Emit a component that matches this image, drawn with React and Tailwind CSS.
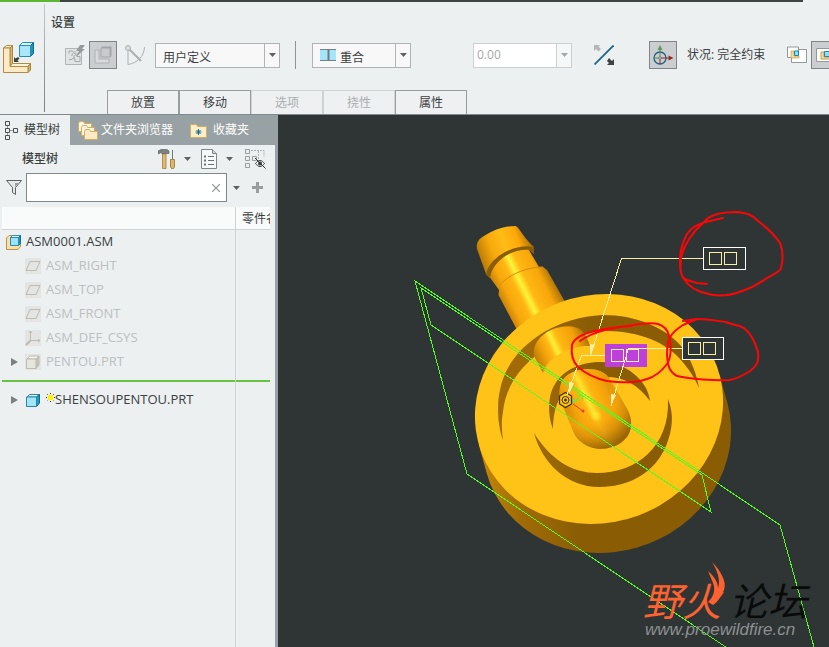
import React from 'react';
import clsx from 'clsx';

const tabs = [
    { label: '放置' },
    { label: '移动' },
    { label: '选项', disabled: true },
    { label: '挠性', disabled: true },
    { label: '属性' },
];

const treeItems = [
    { name: 'ASM_RIGHT', icon: 'plane' },
    { name: 'ASM_TOP', icon: 'plane' },
    { name: 'ASM_FRONT', icon: 'plane' },
    { name: 'ASM_DEF_CSYS', icon: 'csys' },
    { name: 'PENTOU.PRT', icon: 'part', expandable: true },
];

const Caret = ({ className }) => (
    <svg viewBox="0 0 7 4" className={clsx('w-[7px] h-1 shrink-0', className)} aria-hidden="true">
        <path d="M0 0h7L3.500 4z" fill="currentColor" />
    </svg>
);

const AssembleIcon = () => (
    <svg viewBox="0 0 32 32" className="w-8 h-8" aria-hidden="true">
        <path d="M.5 6l3-2.500h6L7 6z" fill="#fdf0cd" stroke="#b18c45" />
        <path d="M7 6l2.500-2.500v18L7 24.500z" fill="#d6b878" stroke="#a9853f" />
        <path d="M7 24.500l2.500-3h18l-2.500 3z" fill="#fff3d3" stroke="#b18c45" />
        <path d="M25 24.500l2.500-3v6.500l-2.500 2.500z" fill="#d2b26d" stroke="#a9853f" />
        <path d="M.5 6H7v18.500h18v6H.5z" fill="#fdeac5" stroke="#b18c45" />
        <path d="M16.500 3.500l3-3h11l-3 3z" fill="#d9f5fc" stroke="#2b8db0" />
        <path d="M27.500 3.500l3-3v11l-3 3z" fill="#1b94bd" stroke="#136c8d" />
        <path d="M16.500 3.500h11v11h-11z" fill="#a9e6fa" stroke="#2b8db0" />
        <path d="M11 15v5h5l-1.500-1.500 2-2-1.500-1.500-2.500 1.500z" fill="#3d4242" />
    </svg>
);

const PuzzleIcon = () => (
    <svg viewBox="0 0 20 20" className="w-5 h-5" fill="none" aria-hidden="true">
        <path d="M.5 3.500h16v16H.5z" fill="#e2e3e3" stroke="#b1b3b4" />
        <path d="M4 8.500V6h3c2 0 2 3 0 3v2M4 14.500h3c0-2 3-2 3 0v2h5v-5h-3c0-2-3-2-3 0v3M10 6v3h3" stroke="#a5a7a8" />
        <path d="M15 0h5l-3 4h3l-9 8 3-6h-3z" fill="#97999a" />
    </svg>
);

const InterfaceIcon = () => (
    <svg viewBox="0 0 20 20" className="w-5 h-5" aria-hidden="true">
        <path d="M2 5h4v9h10v4H2z" fill="#d8d9da" stroke="#b0b1b3" />
        <path d="M8 3l1.500-1.500h9V11L17 12.500z" fill="#a4a5a7" />
        <path d="M8 3h9v9H8z" fill="#c9cacc" stroke="#a4a5a7" />
    </svg>
);

const MechanismIcon = () => (
    <svg viewBox="0 0 20 20" className="w-5 h-5" fill="none" stroke="#adafb0" aria-hidden="true">
        <path d="M3 5v14.500M3 19.500C12 18 19 12 19.500 2" />
        <path d="M4 4l12 12" strokeWidth="2" />
        <circle cx="3" cy="3" r="2.500" fill="#dcdedf" />
    </svg>
);

const FlipIcon = () => (
    <svg viewBox="0 0 20 20" className="w-5 h-5" aria-hidden="true">
        <path d="M.5 19.500l19-19" stroke="#1b6483" strokeWidth="1.800" />
        <path d="M0 0h6L4.500 1.500 7 4 4.500 6.500 2 4 0 6z" fill="#b4b6b7" />
        <path d="M20 20h-7l2-2-2-2 2-3 3 3 2-2z" fill="#3d4242" />
    </svg>
);

const DraggerIcon = () => (
    <svg viewBox="0 0 22 22" className="w-[22px] h-[22px]" fill="none" aria-hidden="true">
        <circle cx="8" cy="14" r="6" stroke="#1b6483" strokeWidth="1.300" />
        <path d="M8 14H2M8 14V5" stroke="#4e8a45" />
        <path d="M8 14v6M8 14h9" stroke="#8e2b24" />
        <path d="M5.500 6L8 1l2.500 5z" fill="#5c9950" />
        <path d="M16.500 11.500l5 2.500-5 2.500z" fill="#952a23" />
        <circle cx="8" cy="14" r="1.200" fill="#ecf0f1" stroke="#333" strokeWidth=".5" />
    </svg>
);

const WindowIcon = () => (
    <svg viewBox="0 0 20 18" className="w-5 h-[18px] shrink-0" aria-hidden="true">
        <path d="M4.500 3.500h15v13h-15z" fill="#fff" stroke="#949899" />
        <path d="M.5 1h11v10.500H.5z" fill="#fdfdfd" stroke="#949899" />
        <path d="M4 5h3v5h5v2H4z" fill="#f4dca2" stroke="#c59d4c" strokeWidth=".7" />
        <path d="M7.500 5h4v4.500h-4z" fill="#8ee0f8" stroke="#1f86ac" />
    </svg>
);

const MainWindowIcon = () => (
    <svg viewBox="0 0 20 18" className="w-5 h-[18px] shrink-0" aria-hidden="true">
        <path d="M.5 2.500h19v13H.5z" fill="#fff" stroke="#949899" />
        <path d="M5 6h3v5h6v2H5z" fill="#f4dca2" stroke="#c59d4c" />
        <path d="M8.500 5.500h5v5h-5z" fill="#8ee0f8" stroke="#1f86ac" />
    </svg>
);

const ModelTreeIcon = () => (
    <svg viewBox="0 0 14 19" className="w-[14px] h-[19px]" fill="none" stroke="#4b4f50" aria-hidden="true">
        <path d="M1.500.5h4v4h-4zM1.500 7.500h4v4h-4zM1.500 14.500h4v4h-4zM9.500 7.500h4v4h-4z" />
        <path d="M3.500 4.500v3M3.500 11.500v3M5.500 9.500h4" strokeDasharray="1 1" />
    </svg>
);

const FoldersIcon = () => (
    <svg viewBox="0 0 20 19" className="w-5 h-[19px]" stroke="#d5ad62" aria-hidden="true">
        <path d="M.5 2.500l1-2h4l1 2h7v8H.5z" fill="#fff5df" />
        <path d="M3.500 6.500l1-2h4l1 2h7v8h-13z" fill="#fff5df" />
        <path d="M6.500 10.500l1-2h4l1 2h7v8h-13z" fill="#fcebc4" />
    </svg>
);

const FavoriteIcon = () => (
    <svg viewBox="0 0 17 15" className="w-[17px] h-[15px]" aria-hidden="true">
        <path d="M.5 3.500V1.500h6l1 2h9v11H.5z" fill="#fdeecb" stroke="#d5ad62" />
        <path d="M8.500 6v6M5.500 9h6M6.500 7l4 4M10.500 7l-4 4" stroke="#14708f" />
    </svg>
);

const ToolsIcon = () => (
    <svg viewBox="0 0 17 20" className="w-[17px] h-5" aria-hidden="true">
        <path d="M0 2l3-1.500h6L11 2v2.500H8V5H4L3 3.500 0 5z" fill="#7c8082" stroke="#55595b" strokeWidth=".6" />
        <path d="M4.500 5h3.500v14.500H4.500z" fill="#e0bb74" stroke="#a37a35" strokeWidth=".8" />
        <path d="M14 1h1v9h-1z" fill="#72777a" />
        <path d="M12.500 10.500h4v7.500l-1 1.500h-2l-1-1.500z" fill="#e0b768" stroke="#94702f" strokeWidth=".8" />
    </svg>
);

const ListIcon = () => (
    <svg viewBox="0 0 16 20" className="w-4 h-5" fill="none" aria-hidden="true">
        <path d="M.5.500h11l4 4v15H.5z" fill="#f7f8f9" stroke="#7f8485" />
        <path d="M11.500.500v4h4" fill="#c4d7e5" stroke="#7f8485" />
        <path d="M7 7.500h6M7 11.500h6M7 15.500h6" stroke="#6c7172" />
        <path d="M3 7.500h2M3 11.500h2M3 15.500h2" stroke="#6c7172" strokeWidth="2" />
    </svg>
);

const HideTreeIcon = () => (
    <svg viewBox="0 0 21 20" className="w-[21px] h-5" fill="none" aria-hidden="true">
        <path d="M.5.500h4v4h-4zM.5 7.500h4v4h-4zM.5 14.500h4v4h-4zM7.500 7.500h4v4h-4z" stroke="#999d9e" />
        <path d="M6 1.500h13v6M13.500 2v8" stroke="#a9adae" strokeDasharray="2 1" />
        <path d="M10.500 14.500c3-4 6-4 9 0-3 4-6 4-9 0z" fill="#eef1f2" stroke="#3c4142" />
        <circle cx="15" cy="14.500" r="2" fill="#3c4142" />
        <path d="M10 9l10.500 10.500" stroke="#2e3333" />
    </svg>
);

const FunnelIcon = () => (
    <svg viewBox="0 0 16 15" className="w-4 h-[15px]" aria-hidden="true">
        <path d="M.5.500h15L9.500 7.500v7l-3-2v-5z" fill="#e5e9ea" stroke="#5e6364" />
        <path d="M9 3h4L9 7z" fill="#9a9fa0" />
    </svg>
);

const AssemblyNodeIcon = () => (
    <svg viewBox="0 0 15 15" className="w-[15px] h-[15px] shrink-0" aria-hidden="true">
        <path d="M.5 3L3 .5h11.500v11L12 14.500H.5z" fill="#f7e0ab" stroke="#ba9146" />
        <path d="M4.500 2.500l2-2h8l-2 2z" fill="#e0f7fd" stroke="#2b8db0" />
        <path d="M12.500 2.500l2-2v8l-2 2z" fill="#2198c2" stroke="#176f8e" />
        <path d="M4.500 2.500h8v8h-8z" fill="#9be3f9" stroke="#2b8db0" />
    </svg>
);

const NodeIcon = ({ type }) => (
    <svg viewBox="0 0 16 16" className="w-4 h-4 shrink-0 bg-[#e3e4e3]" fill="none" stroke="#bdbcae" aria-hidden="true">
        {type === 'plane' && <path d="M5 3.500h10L11 12.500H1z" />}
        {type === 'csys' && (
            <g>
                <path d="M5.500 1v9.500H15M4 3l1.500-2L7 3M13 9l2 1.500-2 1.500" />
                <path d="M5.500 10.500L1 15" strokeWidth="2" />
            </g>
        )}
        {type === 'part' && (
            <g>
                <path d="M2 5l3-3h9l-3 3z" fill="#f5f5f0" />
                <path d="M11 5l3-3v9l-3 3.500z" fill="#c5c4b4" />
                <path d="M1.500 5H11v9.500H1.500z" fill="#e6e6df" />
            </g>
        )}
    </svg>
);

const PartIcon = () => (
    <svg viewBox="0 0 14 13" className="w-[14px] h-[13px] shrink-0" aria-hidden="true">
        <path d="M1 3L3.500.500h10L10.500 3z" fill="#dff7fd" stroke="#2a85a6" />
        <path d="M10.500 3l3-2.500v8.500l-3 3.500z" fill="#1d9bc9" stroke="#14698a" />
        <path d="M.5 3h10v9.500H.5z" fill="#a2e6fa" stroke="#2a85a6" />
    </svg>
);

const Expander = ({ name }) => (
    <button type="button" aria-label={`展开 ${name}`} className="w-2 h-6 flex items-center shrink-0">
        <svg viewBox="0 0 7 8" className="w-[7px] h-2" aria-hidden="true">
            <path d="M0 0l7 4-7 4z" fill="#7c8081" />
        </svg>
    </button>
);

const Ribbon = () => (
    <header className="shrink-0 border-b border-[#7e8b8e]">
        <div className="flex h-[2px]">
            <div className="w-[60px] bg-[#5db534]" />
            <div className="flex-1 bg-[#3c4444]" />
            <div className="w-[26px]" />
        </div>
        <div className="flex h-28">
            <button type="button" aria-label="装配" className="w-11 shrink-0 flex items-center pl-[3px]">
                <AssembleIcon />
            </button>
            <div className="w-px my-[2px] shrink-0 bg-linear-to-b from-[#c5c9ca] to-[#7b8081]" />
            <div className="flex-1 min-w-0 flex flex-col">
                <h1 className="pl-[6px] pt-[13px] h-[39px] leading-4 text-xs font-medium">设置</h1>
                <div className="flex items-center h-7 pl-5 whitespace-nowrap overflow-hidden shrink-0">
                    <button type="button" aria-label="界面放置" className="shrink-0">
                        <PuzzleIcon />
                    </button>
                    <button type="button" aria-label="手动放置" className="ml-1 w-7 h-7 flex items-center justify-center shrink-0 border border-[#828586] bg-[#cbcdd0]">
                        <InterfaceIcon />
                    </button>
                    <button type="button" aria-label="约束转换" className="ml-2 shrink-0">
                        <MechanismIcon />
                    </button>
                    <div className="relative ml-[10px] w-[125px] h-[25px] shrink-0 bg-[#f8f8f8] border border-[#b0b3b4]">
                        <select aria-label="连接类型" className="appearance-none w-full h-full pl-[7px] pr-4 pb-[2px] text-xs outline-none">
                            <option>用户定义</option>
                        </select>
                        <span className="absolute right-0 inset-y-0 w-[15px] flex items-center justify-center border-l border-[#b0b3b4] pointer-events-none text-[#5e6262]">
                            <Caret />
                        </span>
                    </div>
                    <div className="ml-[15px] w-px h-7 shrink-0 bg-[#8f9495]" />
                    <div className="relative ml-4 w-[99px] h-[25px] shrink-0 bg-[#f8f8f8] border border-[#b0b3b4]">
                        <svg viewBox="0 0 16 12" className="absolute left-[7px] top-[5px] w-4 h-3" aria-hidden="true">
                            <path d="M0 0h16v12H0z" fill="#a3e5fa" />
                            <path d="M0 .5h16M0 11.500h16" stroke="#71828a" />
                            <path d="M8.500 0v12" stroke="#777" strokeWidth="2" />
                        </svg>
                        <select aria-label="约束类型" className="appearance-none w-full h-full pl-[27px] pr-4 pb-[2px] text-xs outline-none">
                            <option>重合</option>
                        </select>
                        <span className="absolute right-0 inset-y-0 w-[15px] flex items-center justify-center border-l border-[#b0b3b4] pointer-events-none text-[#5e6262]">
                            <Caret />
                        </span>
                    </div>
                    <div className="flex ml-[62px] w-[99px] h-[25px] shrink-0 border border-[#cdd0d1] bg-white">
                        <input aria-label="偏移" disabled defaultValue="0.00" className="flex-1 min-w-0 pl-[3px] text-xs text-[#a5a8a9] outline-none" />
                        <button type="button" disabled aria-label="最近使用的值" className="w-[15px] flex items-center justify-center border-l border-[#cdd0d1] bg-[#f6f7f7] text-[#a5a8a9]">
                            <Caret />
                        </button>
                    </div>
                    <button type="button" aria-label="反向" className="ml-[22px] shrink-0">
                        <FlipIcon />
                    </button>
                    <button type="button" aria-label="3D 拖动器" className="ml-[35px] w-7 h-7 flex items-center justify-center shrink-0 border border-[#828586] bg-[#cbcdd0]">
                        <DraggerIcon />
                    </button>
                    <span className="ml-[10px] text-xs">状况: 完全约束</span>
                    <button type="button" aria-label="单独窗口" className="ml-[22px] shrink-0">
                        <WindowIcon />
                    </button>
                    <button type="button" aria-label="主窗口" className="ml-1 pl-1 w-7 h-7 flex items-center shrink-0 border border-[#828586] bg-[#cbcdd0]">
                        <MainWindowIcon />
                    </button>
                </div>
                <nav className="flex mt-auto pl-[62px]">
                    {tabs.map((tab) => (
                        <button
                            key={tab.label}
                            type="button"
                            disabled={tab.disabled}
                            className={clsx(
                                'w-[72px] h-6 border border-b-0 bg-[#eff0f2] text-xs leading-5',
                                tab.disabled ? 'border-[#d0d3d4] text-[#abaeaf]' : 'border-[#989d9e]'
                            )}
                        >
                            {tab.label}
                        </button>
                    ))}
                </nav>
            </div>
        </div>
    </header>
);

const Sidebar = () => (
    <aside className="w-[278px] shrink-0 flex flex-col border-r-3 border-[#98a1a3]">
        <nav className="flex h-[30px] bg-[#98a1a3] text-white text-xs">
            <button type="button" className="w-[70px] pl-1 flex items-center gap-[6px] bg-[#ecf0f1] text-[#3a3f40]">
                <ModelTreeIcon />
                模型树
            </button>
            <button type="button" className="pl-2 flex items-center gap-[3px]">
                <FoldersIcon />
                文件夹浏览器
            </button>
            <button type="button" className="pl-[17px] flex items-center gap-[6px]">
                <FavoriteIcon />
                收藏夹
            </button>
        </nav>

        <div className="flex items-center h-7 pl-[22px] pr-[9px]">
            <h2 className="text-xs font-medium flex-1">模型树</h2>
            <button type="button" aria-label="设置" className="flex items-center gap-[9px] text-[#5e6262]">
                <ToolsIcon />
                <Caret />
            </button>
            <button type="button" aria-label="显示" className="ml-[10px] flex items-center gap-[9px] text-[#5e6262]">
                <ListIcon />
                <Caret />
            </button>
            <button type="button" aria-label="隐藏树" className="ml-3">
                <HideTreeIcon />
            </button>
        </div>

        <div className="flex items-center pl-[6px] pr-3">
            <FunnelIcon />
            <div className="flex flex-1 ml-1 h-[29px] border border-[#7d898c] bg-white">
                <input aria-label="过滤模型树" className="flex-1 min-w-0 px-1 text-xs outline-none" />
                <button type="button" aria-label="清除" className="w-5 flex items-center justify-center">
                    <svg viewBox="0 0 8 8" className="w-2 h-2" aria-hidden="true">
                        <path d="M0 0l8 8M8 0L0 8" stroke="#8e9293" strokeWidth="1.200" />
                    </svg>
                </button>
            </div>
            <button type="button" aria-label="搜索选项" className="ml-[6px] text-[#5e6262]">
                <Caret />
            </button>
            <button type="button" aria-label="添加" className="ml-3">
                <svg viewBox="0 0 11 11" className="w-[11px] h-[11px]" aria-hidden="true">
                    <path d="M5.500 0v11M0 5.500h11" stroke="#999d9e" strokeWidth="3" />
                </svg>
            </button>
        </div>

        <div className="flex-1 flex flex-col mt-[5px] pl-[2px] pr-[5px]">
            <table className="w-full table-fixed border-separate border-spacing-0 text-[13px] text-left whitespace-nowrap">
                <colgroup>
                    <col />
                    <col className="w-[34px]" />
                </colgroup>
                <thead className="bg-[#f9fafa]">
                    <tr className="h-[23px]">
                        <th aria-label="名称" className="p-0 border-r border-b border-[#cfd3d4]" />
                        <th className="p-0 pl-[6px] pt-[2px] border-b border-[#cfd3d4] overflow-hidden text-xs font-normal">零件名</th>
                    </tr>
                </thead>
                <tbody>
                    <tr>
                        <td className="p-0 border-r border-[#cfd3d4]">
                            <div className="flex items-center h-6 pl-1 gap-[5px]">
                                <AssemblyNodeIcon />
                                ASM0001.ASM
                            </div>
                        </td>
                        <td />
                    </tr>
                    {treeItems.map((item) => (
                        <tr key={item.name} className="text-[#bcbfc0]">
                            <td className="p-0 border-r border-[#cfd3d4]">
                                <div className={clsx('flex items-center h-6', item.expandable ? 'pl-[9px]' : 'pl-[23px]')}>
                                    {item.expandable && (
                                        <span className="w-[14px] flex">
                                            <Expander name={item.name} />
                                        </span>
                                    )}
                                    <NodeIcon type={item.icon} />
                                    <span className="ml-[5px]">{item.name}</span>
                                </div>
                            </td>
                            <td />
                        </tr>
                    ))}
                    {/* Insertion bar */}
                    <tr className="h-[14px]">
                        <td className="p-0 border-r border-[#cfd3d4]">
                            <div className="h-[2px] bg-[#68c242]" />
                        </td>
                        <td className="p-0">
                            <div className="h-[2px] bg-[#68c242]" />
                        </td>
                    </tr>
                    <tr>
                        <td className="p-0 border-r border-[#cfd3d4]">
                            <div className="flex items-center h-6 pl-[9px]">
                                <span className="w-[15px] flex">
                                    <Expander name="SHENSOUPENTOU.PRT" />
                                </span>
                                <PartIcon />
                                <svg viewBox="0 0 9 9" className="w-[9px] h-[9px] ml-[6px] mb-[6px] shrink-0" aria-hidden="true">
                                    <path d="M4.500 0v9M0 4.500h9M1 1l7 7M8 1L1 8" stroke="#2e2e18" strokeDasharray="1 1" />
                                    <path d="M2 2h5v5H2z" fill="#fff200" />
                                </svg>
                                SHENSOUPENTOU.PRT
                            </div>
                        </td>
                        <td />
                    </tr>
                </tbody>
            </table>
            <div className="flex flex-1">
                <div className="flex-1 border-r border-[#cfd3d4]" />
                <div className="w-[34px]" />
            </div>
        </div>
    </aside>
);

const Nozzle = () => (
    <g>
        {/* Hose barb */}
        <path d="M486 272L499 290L498.500 295L516 328L535 360L580 330L564 300L547 270L543 267L539 267L526 245L500 240z" fill="url(#neck)" />
        <path d="M500 285C506 277 524 267 543 267" fill="none" stroke="#d38a06" strokeWidth="1" />
        <path d="M477 249C476 244 478 239 484 236C493 230 504 226 515 226C519 226 521 235 534 247L534 254L528 248C512 246 492 262 490 278L486 274z" fill="url(#barb)" />
        <path d="M534 247C514 243 488 258 486 275L490 278C492 262 511 248 530 250L534 254z" fill="#8a5d05" />

        {/* Disc */}
        <path d="M478.700 444.200L486.700 473.200A125.400 113.500 -20 0 0 727.300 402.800L719.300 373.800z" fill="url(#side)" />
        <ellipse cx="599" cy="409" rx="125.400" ry="113.500" transform="rotate(-20 599 409)" fill="#ffc216" />

        {/* Outer groove */}
        <path
            d="M503 440C497 424 497 402 500 390C507 351 549 318 602 315C638 315 666 328 684 349C691 360 697 375 699 388C694 376 688 368 680 359C666 343 640 331 606 331C556 332 507 366 503 412C501 422 502 431 503 440z"
            fill="url(#groove)"
        />
        <path
            d="M534 433C551 460 572 473 597 473C636 473 670 447 668 399C674 414 673 429 666 446C655 472 630 487 599 487C567 487 542 463 534 433z"
            fill="url(#groove)"
        />

        {/* Middle tube */}
        <path d="M534 356C532 345 540 335 551 330C563 325 576 325 582 331C586 335 588 340 590 346C574 345 548 355 543 373z" fill="url(#middle)" />

        {/* Centre hole and tip */}
        <path
            d="M553 429C547 414 548 394 555 384C564 369 582 362 601 362C625 362 648 380 650 401C639 386 625 377 608 377L570 385C557 396 553 413 553 429z"
            fill="url(#groove)"
        />
        <path
            d="M560 399C558 386 562 377 571 373C583 367 602 367 609 378L627 409C633 420 632 430 627 437C620 446 609 449 600 449C589 448 581 444 575 435z"
            fill="url(#tip)"
        />
        <path
            d="M560 399C558 386 562 377 571 373C583 367 602 367 609 378L627 409C633 420 632 430 627 437C620 446 609 449 600 449C589 448 581 444 575 435z"
            fill="url(#tipShade)"
        />
        <ellipse cx="596" cy="416" rx="4" ry="3" fill="#fff93c" opacity=".7" filter="url(#glow)" />
    </g>
);

const GlyphBox = ({ x, y, width, selected }) => (
    <g fill="none" shapeRendering="crispEdges">
        <rect x={x + 0.5} y={y + 0.5} width={width} height="22" fill={selected ? '#bd3fdc' : '#2f3535'} stroke={selected ? '#bd3fdc' : '#fff'} />
        <rect x={x + 6} y={y + 5.5} width="12" height="12" stroke="#f6efa6" />
        <rect x={x + 21} y={y + 5.5} width="12" height="12" stroke="#f6efa6" />
    </g>
);

const Viewport = () => (
    <main className="flex-1 min-w-0 relative bg-[#2f3535]">
        <svg viewBox="278 115 551 532" preserveAspectRatio="xMidYMid slice" className="absolute inset-0 w-full h-full" role="img" aria-label="ASM0001">
            <defs>
                <linearGradient id="neck" gradientUnits="userSpaceOnUse" x1="500" y1="304" x2="557" y2="276">
                    <stop offset="0" stopColor="#b97805" />
                    <stop offset=".18" stopColor="#f8a70c" />
                    <stop offset=".34" stopColor="#ffb514" />
                    <stop offset=".44" stopColor="#fff43a" />
                    <stop offset=".54" stopColor="#ffb813" />
                    <stop offset=".76" stopColor="#f8a60a" />
                    <stop offset="1" stopColor="#8f5e04" />
                </linearGradient>
                <linearGradient id="barb" gradientUnits="userSpaceOnUse" x1="480" y1="258" x2="532" y2="238">
                    <stop offset="0" stopColor="#ba7a05" />
                    <stop offset=".25" stopColor="#f7a90b" />
                    <stop offset=".5" stopColor="#ffbc17" />
                    <stop offset=".75" stopColor="#ffa909" />
                    <stop offset="1" stopColor="#9c6604" />
                </linearGradient>
                <linearGradient id="middle" gradientUnits="userSpaceOnUse" x1="534" y1="360" x2="590" y2="334">
                    <stop offset="0" stopColor="#b67605" />
                    <stop offset=".2" stopColor="#f3a20a" />
                    <stop offset=".32" stopColor="#ffb916" />
                    <stop offset=".4" stopColor="#fff03a" />
                    <stop offset=".5" stopColor="#ffb713" />
                    <stop offset=".75" stopColor="#f3a009" />
                    <stop offset="1" stopColor="#936104" />
                </linearGradient>
                <linearGradient id="tip" gradientUnits="userSpaceOnUse" x1="562" y1="417" x2="627" y2="386">
                    <stop offset="0" stopColor="#a96e05" />
                    <stop offset=".2" stopColor="#f3a20a" />
                    <stop offset=".35" stopColor="#ffb513" />
                    <stop offset=".42" stopColor="#ffe62f" />
                    <stop offset=".52" stopColor="#ffb411" />
                    <stop offset=".7" stopColor="#f3a009" />
                    <stop offset="1" stopColor="#875904" />
                </linearGradient>
                <radialGradient id="tipShade" gradientUnits="userSpaceOnUse" cx="586" cy="396" r="56">
                    <stop offset=".35" stopColor="#f9a80c" stopOpacity="0" />
                    <stop offset=".55" stopColor="#f7a60b" stopOpacity=".8" />
                    <stop offset=".75" stopColor="#d78e08" stopOpacity=".85" />
                    <stop offset="1" stopColor="#8d5e05" stopOpacity=".9" />
                </radialGradient>
                <linearGradient id="side" gradientUnits="userSpaceOnUse" x1="480" y1="0" x2="580" y2="0">
                    <stop offset="0" stopColor="#c58708" />
                    <stop offset=".4" stopColor="#a16c06" />
                    <stop offset="1" stopColor="#8a5d05" />
                </linearGradient>
                <linearGradient id="groove" gradientUnits="userSpaceOnUse" x1="534" y1="0" x2="590" y2="0">
                    <stop offset="0" stopColor="#a06b06" />
                    <stop offset="1" stopColor="#8a5d05" />
                </linearGradient>
                <filter id="glow">
                    <feGaussianBlur stdDeviation="2" />
                </filter>
            </defs>

            <Nozzle />

            {/* Datum planes */}
            <g fill="none" stroke="#52fb22" shapeRendering="crispEdges">
                <path d="M829 716L467 474L415 281L780 525L814 647L833 716" />
                <path d="M421 288L431 325L711 512L702 475z" />
                <path d="M574 403L581 395M578 395l4 1 0 5" />
            </g>

            {/* Coordinate system marker */}
            <path d="M573 404L583 411" stroke="#f33a25" />
            <circle cx="583" cy="411" r="1.500" fill="#f33a25" />
            <path d="M571 397l3 4-3 3z" fill="#2fe6e5" />
            <g fill="#ffc216" stroke="#3b3210">
                <path d="M565.500 392.500l6 3.500v8l-6 3.500-6-3.500v-8z" strokeWidth="1.300" />
                <circle cx="565.500" cy="400" r="3.500" />
                <circle cx="565.500" cy="400" r="1" fill="#3b3210" />
            </g>

            {/* Constraint leaders */}
            <GlyphBox x={703} y={247} width={42} />
            <GlyphBox x={605} y={344} width={41} selected />
            <GlyphBox x={682} y={337} width={41} />
            <g fill="none" stroke="#f6efa6" shapeRendering="crispEdges">
                <path d="M703 258.500H621.500L591 354" />
                <path d="M605 355.500H581.500L567 395" />
                <path d="M682 348.500H628.500L611 406" />
            </g>
            <g fill="#f6efa6">
                <path d="M590 344l5 1-5 10z" />
                <path d="M569 382l5 1-5 11z" />
                <path d="M611 394l5 1-5 10z" />
            </g>

            {/* Markup */}
            <g fill="none" stroke="#fb0606" strokeWidth="2" strokeLinecap="round" strokeLinejoin="round">
                <path d="M723 218L710 221C700 223 690 228 686 236C680 248 679 262 681 273C684 283 695 291 705 293C717 297 730 296 742 291C752 288 760 283 767 278C774 274 780 272 781 268C783 260 783 250 780 243C774 234 766 227 758 221C752 214 745 213 737 212C722 212 710 214 704 222C694 231 684 243 681 258C680 270 680 277 687 280L697 283L707 284" />
                <path d="M580 341C594 331 612 328 633 325C645 323 655 323 658 324C664 326 668 330 669 336C672 346 671 358 667 364C661 372 654 377 647 379C636 383 622 383 607 381C594 378 586 374 578 367C572 361 571 353 572 345C574 338 584 333 595 331C607 328 620 327 632 326" />
                <path d="M683 321L697 319C708 319 718 321 726 322C732 325 742 325 745 329C752 335 756 345 758 352C759 360 758 365 750 371C742 376 736 379 730 380C715 381 690 379 677 376C670 372 668 368 667 355C667 340 669 334 683 325L697 319" />
            </g>

            {/* Forum mark */}
            <g className="font-['Noto_Sans_CJK_SC',sans-serif] italic" fontSize="39">
                <text x="643" y="616" fill="#fd6230">野火</text>
                <text x="729" y="616" fill="#090b0b">论坛</text>
            </g>
            <path d="M712 562C721 571 727 582 724 590C721 597 717 602 713 605L708 602C713 598 716 590 713 583L708 571C715 577 718 583 718 588C721 580 717 570 712 562z" fill="#fd6230" />
            <text x="645" y="635" fill="#8d9090" fontSize="17" className="font-['Liberation_Sans',sans-serif] italic">
                www.proewildfire.cn
            </text>
        </svg>
    </main>
);

const App = () => {
    return (
        <div className="min-h-screen flex flex-col overflow-hidden bg-[#ecf0f1] text-[#3a3f40] font-['Open_Sans','Noto_Sans_CJK_SC',sans-serif]">
            <Ribbon />
            <div className="flex-1 flex">
                <Sidebar />
                <Viewport />
            </div>
        </div>
    );
};

export default App;
